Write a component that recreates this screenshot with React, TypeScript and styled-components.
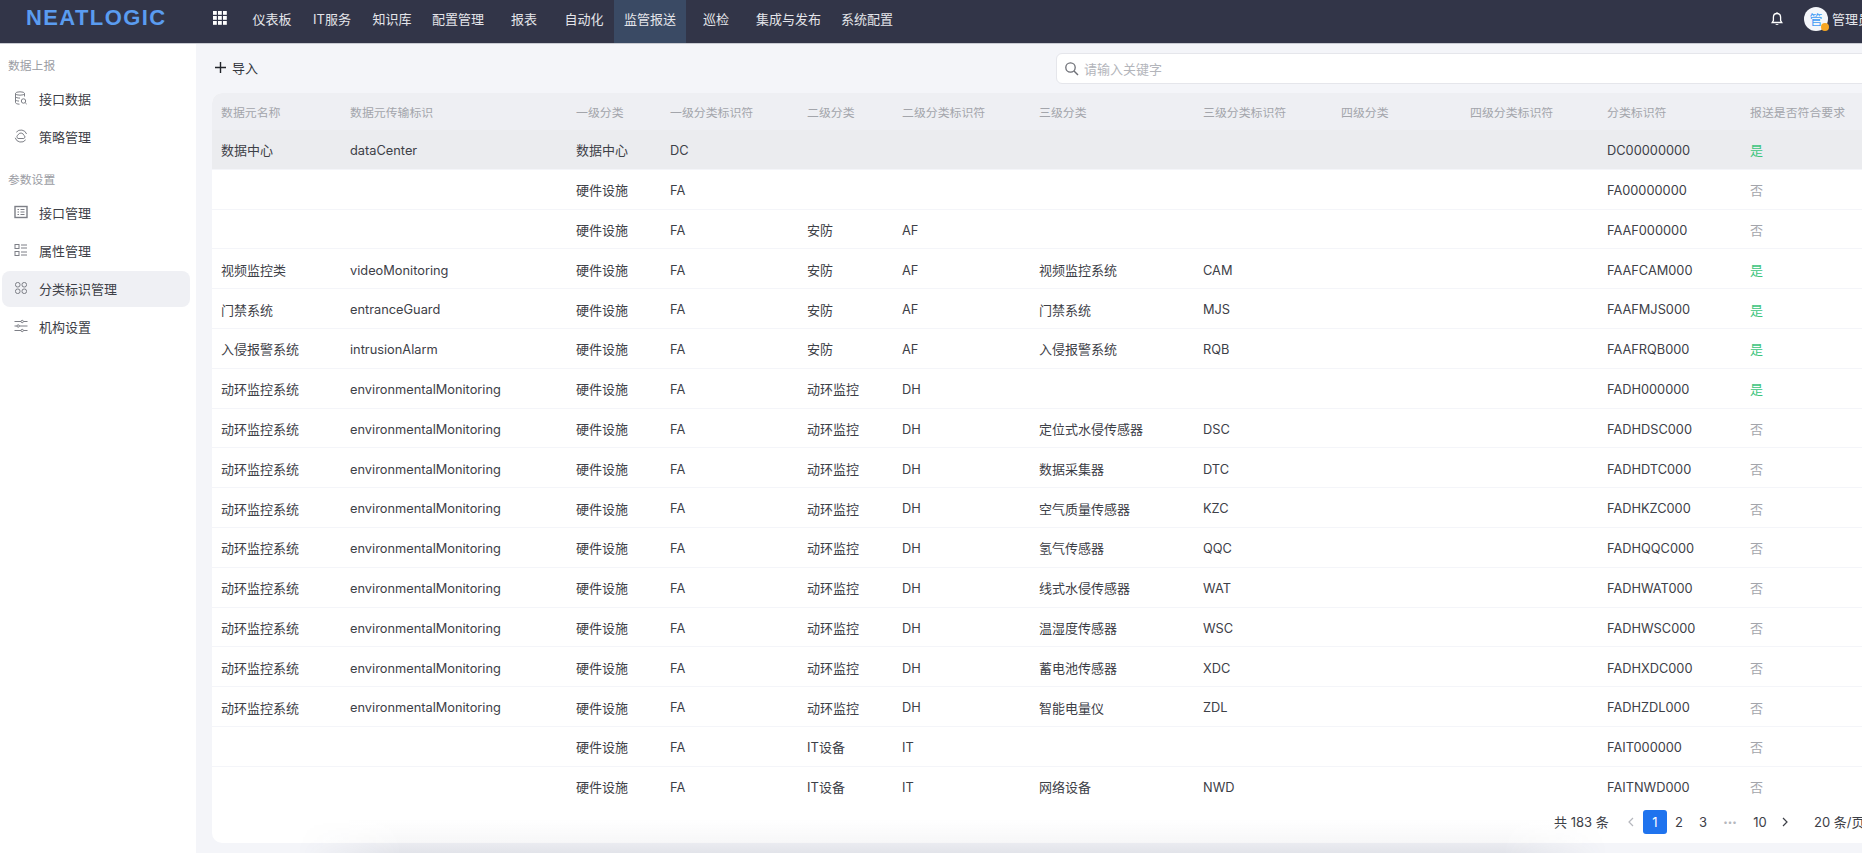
import React from "react";
import styled, { createGlobalStyle } from "styled-components";

const Global = createGlobalStyle`
  html, body { margin: 0; padding: 0; height: 100%; overflow: hidden; background: #f4f5f9; }
  body { font-family: Inter, "Noto Sans CJK SC", "Liberation Sans", sans-serif; font-size: 13px; color: #3d4047; }
  * { box-sizing: border-box; }
`;

const Page = styled.div`
  width: 1862px; height: 853px; display: flex; flex-direction: column; overflow: hidden; position: relative;
`;
const TopBar = styled.header`
  height: 44px; flex: none; display: flex; background: #323548; border-bottom: 1px solid #c9cbd2; color: #e4e5ea; white-space: nowrap;
`;
const LogoBox = styled.div`
  width: 242px; flex: none; display: flex; height: 36px; align-items: center; padding-left: 26px; gap: 47px;
`;
const LogoText = styled.span`
  font-family: "Liberation Sans", sans-serif; font-weight: 700; font-size: 22px; letter-spacing: 1.4px; color: #5a9cf0; width: 140px;
  line-height: 22px; flex: none;
`;
const MenuIcon = styled.svg`
  width: 14px; height: 14px; flex: none; display: block;
`;
const Nav = styled.nav`
  display: flex; flex: 1;
`;
const NavItem = styled.div<{ $active?: boolean }>`
  min-width: 60px; padding: 0 10px 6px; display: flex; align-items: center; justify-content: center; font-size: 13px;
  color: #e4e5ea; background: ${(p) => (p.$active ? "#3a4a64" : "transparent")};
`;
const UserArea = styled.div`
  display: flex; align-items: center; height: 37px; width: 100px; flex: none; overflow: hidden;
  padding-left: 8px; font-size: 13px;
`;
const BellIcon = styled.svg`
  width: 14px; height: 14px; flex: none; margin-right: 20px; display: block;
`;
const Avatar = styled.div`
  width: 24px; height: 24px; border-radius: 50%; background: #f4f6fa; color: #3f9bf5; font-size: 13px; flex: none;
  display: flex; align-items: center; justify-content: center; position: relative; margin-right: 4px;
`;
const AvatarBadge = styled.span`
  position: absolute; right: -1px; bottom: 0; width: 8px; height: 8px; border-radius: 50%; background: #f5a623;
`;
const UserName = styled.span`
  flex: none; color: #e4e5ea;
`;
const Body = styled.div`
  flex: 1; display: flex; min-height: 0;
`;
const Side = styled.aside`
  width: 196px; flex: none; background: #fff; padding: 12px 6px 0 2px;
`;
const GroupLabel = styled.div<{ $first?: boolean }>`
  font-size: 11.8px; color: #9a9ca3; height: 20px; line-height: 20px; padding-left: 6px;
  margin: ${(p) => (p.$first ? "0 0 5px" : "15px 0 5px")};
`;
const SideItem = styled.div<{ $active?: boolean }>`
  height: 36px; margin-bottom: 2px; border-radius: 8px; display: flex; align-items: center; gap: 11px; padding: 0 0 2px 12px;
  font-size: 13px; color: #3d4047; background: ${(p) => (p.$active ? "#eff0f4" : "transparent")};
`;
const SideIcon = styled.svg`
  width: 14px; height: 14px; flex: none; display: block;
  fill: none; stroke: #7d7f86; stroke-width: 1;
`;
const Main = styled.main`
  flex: 1; min-width: 0; display: flex; flex-direction: column; padding: 0 0 10px 16px; position: relative; overflow: hidden;
`;
const ToolRow = styled.div`
  height: 49px; flex: none; display: flex; align-items: center; justify-content: space-between;
`;
const ImportButton = styled.div`
  display: flex; align-items: center; gap: 6px; font-size: 13px; padding-left: 3px; padding-bottom: 2px; color: #33363d;
`;
const PlusIcon = styled.svg`
  width: 11px; height: 11px; display: block;
`;
const SearchBox = styled.div`
  width: 900px; flex: none; height: 31px; margin-right: -94px; border: 1px solid #e5e6eb; border-radius: 6px; background: #fff;
  display: flex; align-items: center; gap: 5px; padding: 0 0 1px 7px; color: #b3b5bb; font-size: 13px;
`;
const SearchIcon = styled.svg`
  width: 15px; height: 15px; display: block; flex: none;
`;
const Card = styled.section`
  flex: 1; min-height: 0; width: 1690px; background: #fff; border-radius: 10px; display: flex; flex-direction: column; overflow: hidden;
`;
const cols = "129px 225px 94px 137px 95px 137px 164px 138px 129px 137px 143px 142px";
const HeadRow = styled.div`
  display: grid; grid-template-columns: ${cols}; height: 37px; flex: none; background: #eeeff3; align-items: center;
  color: #a3a5ab; font-size: 11.9px;
`;
const Rows = styled.div`
  flex: 1; min-height: 0; overflow: hidden;
`;
const Row = styled.div<{ $hover?: boolean }>`
  display: grid; grid-template-columns: ${cols}; height: 39.8px; align-items: center; padding-top: 1px;
  background: ${(p) => (p.$hover ? "#ebecef" : "#fff")}; border-bottom: 1.5px solid #f4f5f9; font-size: 13px; color: #3d4047;
`;
const Cell = styled.div<{ $latin?: boolean }>`
  padding-left: 10px; padding-top: ${(p) => (p.$latin ? "1.5px" : "0")}; white-space: nowrap; overflow: hidden;
  font-size: ${(p) => (p.$latin ? "12.8px" : "inherit")};
  &:nth-child(-n + 2) { padding-left: 9px; }
`;
const Flag = styled(Cell)<{ $ok: boolean }>`
  color: ${(p) => (p.$ok ? "#3cc47c" : "#a3a5ab")};
`;
const Pager = styled.div`
  height: 40px; flex: none; display: flex; align-items: center; font-size: 13px; color: #3d4047; padding: 0 0 3px 1342px; white-space: nowrap; position: relative; z-index: 2;
`;
const Total = styled.span`
  width: 65px; flex: none;
`;
const PageBtn = styled.div<{ $active?: boolean; $muted?: boolean }>`
  width: 24px; height: 24px; flex: none; border-radius: 3px; display: flex; align-items: center; justify-content: center;
  background: ${(p) => (p.$active ? "#1f73ee" : "transparent")};
  color: ${(p) => (p.$active ? "#fff" : p.$muted ? "#b5b7bd" : "#3d4047")};
`;
const WidePage = styled(PageBtn)`
  width: 30px;
`;
const NextBtn = styled(PageBtn)`
  width: 20px;
`;
const Dots = styled(PageBtn)`
  width: 30px; font-size: 8px; letter-spacing: 0;
`;
const PerPage = styled.span`
  margin-left: 19px; flex: none;
`;
const Chevron = styled.svg`
  width: 10px; height: 10px; display: block; fill: none; stroke: currentColor; stroke-width: 1.2;
`;
const BottomShade = styled.div`
  position: absolute; left: 101px; width: 1311px; bottom: 0; height: 34px; pointer-events: none; z-index: 1;
  background: linear-gradient(to bottom, rgba(40,45,70,0), rgba(40,45,70,0.035) 65%, rgba(40,45,70,0.085));
  -webkit-mask-image: linear-gradient(to right, transparent, #000 8%, #000 92%, transparent);
  mask-image: linear-gradient(to right, transparent, #000 8%, #000 92%, transparent);
`;

const navItems = ["仪表板", "IT服务", "知识库", "配置管理", "报表", "自动化", "监管报送", "巡检", "集成与发布", "系统配置"];
const heads = ["数据元名称", "数据元传输标识", "一级分类", "一级分类标识符", "二级分类", "二级分类标识符", "三级分类", "三级分类标识符", "四级分类", "四级分类标识符", "分类标识符", "报送是否符合要求"];

const em = ["动环监控系统", "environmentalMonitoring", "硬件设施", "FA", "动环监控", "DH"];
const data: string[][] = [
  ["数据中心", "dataCenter", "数据中心", "DC", "", "", "", "", "DC00000000", "是"],
  ["", "", "硬件设施", "FA", "", "", "", "", "FA00000000", "否"],
  ["", "", "硬件设施", "FA", "安防", "AF", "", "", "FAAF000000", "否"],
  ["视频监控类", "videoMonitoring", "硬件设施", "FA", "安防", "AF", "视频监控系统", "CAM", "FAAFCAM000", "是"],
  ["门禁系统", "entranceGuard", "硬件设施", "FA", "安防", "AF", "门禁系统", "MJS", "FAAFMJS000", "是"],
  ["入侵报警系统", "intrusionAlarm", "硬件设施", "FA", "安防", "AF", "入侵报警系统", "RQB", "FAAFRQB000", "是"],
  [...em, "", "", "FADH000000", "是"],
  [...em, "定位式水侵传感器", "DSC", "FADHDSC000", "否"],
  [...em, "数据采集器", "DTC", "FADHDTC000", "否"],
  [...em, "空气质量传感器", "KZC", "FADHKZC000", "否"],
  [...em, "氢气传感器", "QQC", "FADHQQC000", "否"],
  [...em, "线式水侵传感器", "WAT", "FADHWAT000", "否"],
  [...em, "温湿度传感器", "WSC", "FADHWSC000", "否"],
  [...em, "蓄电池传感器", "XDC", "FADHXDC000", "否"],
  [...em, "智能电量仪", "ZDL", "FADHZDL000", "否"],
  ["", "", "硬件设施", "FA", "IT设备", "IT", "", "", "FAIT000000", "否"],
  ["", "", "硬件设施", "FA", "IT设备", "IT", "网络设备", "NWD", "FAITNWD000", "否"],
];

const gridCells = [0, 1, 2, 3, 4, 5, 6, 7, 8];

const DataIcon = () => (
  <SideIcon viewBox="0 0 14 14">
    <ellipse cx="6" cy="2.5" rx="4.5" ry="1.7" />
    <path d="M1.5 2.5v9c0 .9 1.6 1.6 4 1.7M10.5 2.5v3M1.5 5.5c0 1 2 1.6 4.5 1.6M1.5 8.5c0 .9 1.6 1.5 3.5 1.6" />
    <circle cx="9.5" cy="10" r="2.2" />
    <path d="M11.2 11.7l1.5 1.4" />
  </SideIcon>
);
const PolicyIcon = () => (
  <SideIcon viewBox="0 0 14 14">
    <path d="M2.3 3.2A6 6 0 0 1 12.6 5M1.2 8.8A6 6 0 0 0 11.7 10.8" />
    <path d="M4 9.5a2 2 0 0 1 .1-3.6 3 3 0 0 1 5.7.4 1.7 1.7 0 0 1 0 3.2z" />
  </SideIcon>
);
const PortIcon = () => (
  <SideIcon viewBox="0 0 14 14">
    <rect x="1" y="1.5" width="12" height="11" strokeWidth="1.4" />
    <path d="M3.5 4.5h1.5M6.5 4.5h4M3.5 7h1.5M6.5 7h4M3.5 9.5h1.5M6.5 9.5h4" />
  </SideIcon>
);
const AttrIcon = () => (
  <SideIcon viewBox="0 0 14 14">
    <rect x="1" y="1.5" width="4" height="4" />
    <rect x="1" y="8.5" width="4" height="4" />
    <path d="M7 2h6M7 5h6M7 9h6M7 12h6" />
  </SideIcon>
);
const ClassIcon = () => (
  <SideIcon viewBox="0 0 14 14">
    <rect x="1.5" y="1.5" width="4.5" height="4.5" rx="2" />
    <rect x="8" y="1.5" width="4.5" height="4.5" rx="2" />
    <rect x="1.5" y="8" width="4.5" height="4.5" rx="2" />
    <rect x="8" y="8" width="4.5" height="4.5" rx="2" />
  </SideIcon>
);
const OrgIcon = () => (
  <SideIcon viewBox="0 0 14 14">
    <path d="M.5 2.5h6.5M9.500 2.5h4M.5 7h2.500M5.500 7h8M.5 11.500h6.500M9.500 11.500h4" />
    <circle cx="8.2" cy="2.5" r="1.2" />
    <circle cx="4.2" cy="7" r="1.2" />
    <circle cx="8.2" cy="11.5" r="1.2" />
  </SideIcon>
);

const isLatin = (s: string) => /^[\x00-\x7f]+$/.test(s);

export default function App() {
  return (
    <Page>
      <Global />
      <TopBar>
        <LogoBox>
          <LogoText>NEATLOGIC</LogoText>
          <MenuIcon viewBox="0 0 14 14">
            {gridCells.map((i) => (
              <rect key={i} x={(i % 3) * 5} y={Math.floor(i / 3) * 5} width="3.8" height="3.8" fill="#fff" />
            ))}
          </MenuIcon>
        </LogoBox>
        <Nav>
          {navItems.map((n) => (
            <NavItem key={n} $active={n === "监管报送"}>{n}</NavItem>
          ))}
        </Nav>
        <UserArea>
          <BellIcon viewBox="0 0 14 14">
            <path d="M7 1.5c-2.4 0-3.6 1.8-3.6 3.8v3.2L2.2 10.5h9.6l-1.2-2V5.3c0-2-1.2-3.8-3.6-3.8z" fill="none" stroke="#fff" strokeWidth="1.3" />
            <path d="M5.5 12h3c0 1.2-3 1.2-3 0z" fill="#fff" />
            <circle cx="7" cy="1.2" r="0.9" fill="#fff" />
          </BellIcon>
          <Avatar>
            管
            <AvatarBadge />
          </Avatar>
          <UserName>管理员</UserName>
        </UserArea>
      </TopBar>
      <Body>
        <Side>
          <GroupLabel $first>数据上报</GroupLabel>
          <SideItem><DataIcon />接口数据</SideItem>
          <SideItem><PolicyIcon />策略管理</SideItem>
          <GroupLabel>参数设置</GroupLabel>
          <SideItem><PortIcon />接口管理</SideItem>
          <SideItem><AttrIcon />属性管理</SideItem>
          <SideItem $active><ClassIcon />分类标识管理</SideItem>
          <SideItem><OrgIcon />机构设置</SideItem>
        </Side>
        <Main>
          <ToolRow>
            <ImportButton>
              <PlusIcon viewBox="0 0 11 11">
                <path d="M5.5 0v11M0 5.5h11" stroke="#22252b" strokeWidth="1.4" />
              </PlusIcon>
              导入
            </ImportButton>
            <SearchBox>
              <SearchIcon viewBox="0 0 15 15">
                <circle cx="6.5" cy="6.5" r="4.7" fill="none" stroke="#6d6f76" strokeWidth="1.3" />
                <path d="M10 10l4 4" stroke="#6d6f76" strokeWidth="1.5" />
              </SearchIcon>
              请输入关键字
            </SearchBox>
          </ToolRow>
          <Card>
            <HeadRow>
              {heads.map((h) => <Cell key={h}>{h}</Cell>)}
            </HeadRow>
            <Rows>
              {data.map((r, i) => {
                const v = r[r.length - 1];
                const all = [...r.slice(0, 8), "", "", r[8]];
                return (
                  <Row key={i} $hover={i === 0}>
                    {all.map((c, j) => <Cell key={j} $latin={isLatin(c)}>{c}</Cell>)}
                    <Flag $ok={v === "是"}>{v}</Flag>
                  </Row>
                );
              })}
            </Rows>
            <Pager>
              <Total>共 183 条</Total>
              <PageBtn $muted>
                <Chevron viewBox="0 0 10 10"><path d="M7 1L3 5l4 4" /></Chevron>
              </PageBtn>
              <PageBtn $active>1</PageBtn>
              <PageBtn>2</PageBtn>
              <PageBtn>3</PageBtn>
              <Dots $muted>•••</Dots>
              <WidePage>10</WidePage>
              <NextBtn>
                <Chevron viewBox="0 0 10 10"><path d="M3 1l4 4-4 4" /></Chevron>
              </NextBtn>
              <PerPage>20 条/页</PerPage>
            </Pager>
          </Card>
          <BottomShade />
        </Main>
      </Body>
    </Page>
  );
}
